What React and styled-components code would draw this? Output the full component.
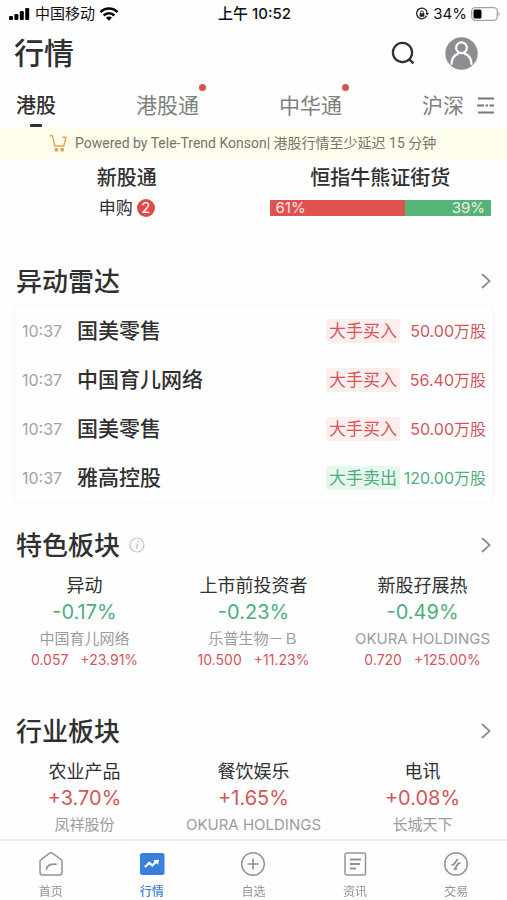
import React from 'react'
import styled, { createGlobalStyle } from 'styled-components'

const GlobalStyle = createGlobalStyle`
    * {
        box-sizing: border-box;
    }

    body {
        margin: 0;
        background: #fefefe;
        color: #303030;
        font-family: Inter, "Noto Sans CJK SC", sans-serif;
    }

    h1, h2, h3, p, ul {
        margin: 0;
        padding: 0;
    }

    h1, h2, h3 {
        font-weight: 500;
    }

    ul {
        list-style: none;
    }

    button {
        display: flex;
        padding: 0;
        border: 0;
        background: none;
        color: inherit;
        font: inherit;
        cursor: pointer;
    }

    a {
        color: inherit;
        text-decoration: none;
    }

    svg {
        display: block;
    }
`

const RED = '#d6555a'
const GREEN = '#4fae7c'

const Page = styled.div`
    display: flex;
    flex-direction: column;
    min-height: 100vh;
`

/* status bar */

const StatusBar = styled.div`
    display: grid;
    grid-template-columns: 1fr auto 1fr;
    align-items: center;
    height: 28px;
    padding: 0 6px 0 8px;
    color: #111;
    font-size: 15px;
    line-height: 20px;
`

const StatusGroup = styled.div`
    display: flex;
    align-items: center;
    justify-content: ${p => (p.$end ? 'flex-end' : 'flex-start')};
    gap: 4px;
`

const Clock = styled.span`
    font-weight: 500;
`

/* title row */

const Header = styled.header`
    display: flex;
    align-items: center;
    height: 50px;
    padding: 0 29px 0 14px;
`

const Title = styled.h1`
    flex: 1;
    font-size: 30px;
    line-height: 40px;
`

const HeaderActions = styled.div`
    display: flex;
    align-items: center;
    gap: 30px;
`

/* market tabs */

const Tabs = styled.nav`
    display: flex;
    align-items: center;
    gap: 13px;
    height: 49px;
    padding: 6px 12px 0 16px;
`

const TabList = styled.div`
    flex: 1;
    display: flex;
    justify-content: space-between;
    align-self: stretch;
`

const Tab = styled.button`
    && {
        position: relative;
        align-items: center;
        color: ${p => (p.$active ? '#303030' : '#808080')};
        font-size: ${p => (p.$active ? 20 : 21)}px;
        font-weight: ${p => (p.$active ? 500 : 400)};
        line-height: 28px;
    }

    &::after {
        content: '';
        display: ${p => (p.$active ? 'block' : 'none')};
        position: absolute;
        bottom: 0;
        left: 50%;
        width: 12px;
        height: 3px;
        margin-left: -6px;
        border-radius: 1px;
        background: #303030;
    }
`

const Dot = styled.i`
    position: absolute;
    top: 0;
    right: -7px;
    width: 7px;
    height: 7px;
    border-radius: 50%;
    background: #d9534f;
`

const Notice = styled.div`
    display: flex;
    align-items: center;
    gap: 8px;
    height: 32px;
    padding-left: 49px;
    background: #fefcea;
    color: #77746a;
    font-family: Roboto, "Noto Sans CJK SC", sans-serif;
    font-size: 14px;
    line-height: 20px;
    white-space: nowrap;
`

/* two shortcuts under the notice */

const Shortcuts = styled.div`
    display: grid;
    grid-template-columns: 1fr 1fr;
    height: 97px;
    padding-top: 5px;
`

const Shortcut = styled.a`
    display: flex;
    flex-direction: column;
    align-items: center;
    gap: 4px;
    padding: 0 16px;
`

const ShortcutTitle = styled.h3`
    font-size: 20px;
    line-height: 28px;
`

const Apply = styled.p`
    display: flex;
    align-items: center;
    gap: 4px;
    font-size: 17px;
    line-height: 24px;
`

const Count = styled.span`
    width: 18px;
    height: 18px;
    border-radius: 50%;
    background: #df4b4a;
    color: #fff;
    font-size: 15px;
    line-height: 18px;
    text-align: center;
`

const Ratio = styled.div`
    display: flex;
    align-self: stretch;
    height: 16px;
    margin-top: 4px;
    color: #fbe9e8;
    font-size: 15px;
    line-height: 16px;
`

const RatioPart = styled.span`
    padding: 0 6px;
    background: ${p => (p.$up ? '#e0524f' : '#55b577')};
    text-align: ${p => (p.$up ? 'left' : 'right')};
`

/* sections */

const SectionHead = styled.div`
    display: flex;
    align-items: center;
    height: 50px;
    padding: 0 16px;
`

const SectionTitle = styled.h2`
    padding-top: 2px;
    font-size: 26px;
    line-height: 36px;
`

const InfoButton = styled.button`
    && {
        margin-left: 9px;
    }
`

const More = styled.button`
    && {
        margin-left: auto;
    }
`

const Card = styled.ul`
    margin: 0 15px 18px;
    border-radius: 4px;
    box-shadow: 0 0 5px rgba(0, 0, 0, 0.05);
`

const Move = styled.li`
    display: flex;
    align-items: center;
    height: 49px;
    padding: 0 6px 0 7px;
    font-size: 16px;
    line-height: 24px;
`

const Time = styled.time`
    width: 55px;
    color: #a2a2a2;
`

const MoveName = styled.span`
    flex: 1;
    font-size: 21px;
    font-weight: 500;
`

const Tag = styled.span`
    padding: 0 3px;
    border-radius: 3px;
    background: ${p => (p.$up ? '#fceeed' : '#e6f7ee')};
    color: ${p => (p.$up ? RED : GREEN)};
    font-size: 17px;
`

const Volume = styled.span`
    width: 86px;
    color: ${p => (p.$up ? RED : GREEN)};
    text-align: right;
    white-space: nowrap;
`

const Boards = styled.div`
    display: grid;
    grid-template-columns: repeat(3, 1fr);
    padding-top: 2px;
    padding-bottom: ${p => (p.$last ? 0 : 37)}px;
`

const Board = styled.a`
    display: flex;
    flex-direction: column;
    align-items: center;
    white-space: nowrap;
`

const BoardName = styled.h3`
    font-size: 18px;
    font-weight: 400;
    line-height: 28px;
`

const Change = styled.span`
    color: ${p => (p.$up ? RED : GREEN)};
    font-size: 20px;
    line-height: 24px;
`

const Stock = styled.span`
    margin-top: 3px;
    color: #9c9c9c;
    font-size: 15px;
    line-height: 24px;
`

const Quote = styled.span`
    display: flex;
    gap: 12px;
    color: ${RED};
    font-size: 14px;
    line-height: 18px;
`

/* bottom bar */

const BottomBar = styled.nav`
    position: sticky;
    bottom: 0;
    display: grid;
    grid-template-columns: repeat(5, 1fr);
    height: 61px;
    margin-top: auto;
    border-top: 2px solid #ededee;
    background: #fefefe;
`

const BottomLink = styled.a`
    display: flex;
    flex-direction: column;
    align-items: center;
    gap: 5px;
    padding-top: 10px;
    color: ${p => (p.$active ? '#3a7fdc' : '#929292')};
    font-size: 12px;
    font-weight: ${p => (p.$active ? 500 : 400)};
    line-height: 20px;
`

/* icons */

const SignalIcon = () => (
    <svg width="23" height="14" viewBox="0 0 23 14" fill="#000">
        <rect x="1" y="9" width="4" height="4" rx="1.2" />
        <rect x="6.4" y="7" width="4" height="6" rx="1.2" />
        <rect x="11.8" y="4" width="4" height="9" rx="1.2" />
        <rect x="17.2" y="1" width="4" height="12" rx="1.2" />
    </svg>
)

const WifiIcon = () => (
    <svg width="20" height="14" viewBox="0 0 20 14" fill="none" stroke="#000" strokeWidth="2.5">
        <path d="M1.5 5.2C6.2.4 13.8.4 18.5 5.2" />
        <path d="M4.7 8.5C7.7 5.5 12.3 5.5 15.3 8.5" />
        <path d="M7 10.8C8.6 9.2 11.4 9.2 13 10.8L10 13.8Z" fill="#000" stroke="none" />
    </svg>
)

const LockIcon = () => (
    <svg width="14" height="14" viewBox="0 0 14 14" fill="none" stroke="#222" strokeWidth="1.3">
        <path d="M11.7 8.8A5.3 5.3 0 1 1 12.2 5.8" />
        <path d="M10.3 6H14L12.2 8.6Z" fill="#222" stroke="none" />
        <rect x="4.6" y="6.2" width="4.8" height="3.6" rx=".6" fill="#222" stroke="none" />
        <path d="M5.6 6.5V5.3a1.4 1.4 0 0 1 2.8 0V6.5" strokeWidth="1" />
    </svg>
)

const BatteryIcon = () => (
    <svg width="30" height="14" viewBox="0 0 30 14">
        <rect x=".7" y=".7" width="25.6" height="12.6" rx="3.5" fill="none" stroke="#a3a3a3" strokeWidth="1.3" />
        <rect x="2.5" y="2.5" width="8" height="9" rx="1.5" fill="#000" />
        <path d="M27.5 4.8Q29.8 7 27.5 9.2Z" fill="#a3a3a3" />
    </svg>
)

const SearchIcon = () => (
    <svg width="24" height="24" viewBox="0 0 24 24" fill="none" stroke="#303030" strokeWidth="2.3">
        <circle cx="11.5" cy="11.5" r="9.6" />
        <path d="M18.3 18.3L22.5 22.3" />
    </svg>
)

const AvatarIcon = () => (
    <svg width="33" height="33" viewBox="0 0 33 33" fill="none" stroke="#fff" strokeWidth="2.2">
        <circle cx="16.5" cy="16.5" r="16.2" fill="#8d8e91" stroke="none" />
        <circle cx="16.5" cy="10.8" r="5.4" />
        <path d="M6.5 27C6.8 21.5 9.2 18.3 13 16.9" strokeLinecap="round" />
        <path d="M20 16.9C23.8 18.3 26.2 21.5 26.5 27" strokeLinecap="round" />
    </svg>
)

const MenuIcon = () => (
    <svg width="18" height="18" viewBox="0 0 18 18" fill="none" stroke="#777" strokeWidth="1.8">
        <path d="M1 1.500H17M0 8.500H7M8.500 8.500H11M12.500 8.500H17M1 15.500H17" />
    </svg>
)

const CartIcon = () => (
    <svg width="18" height="18" viewBox="0 0 18 18" fill="none" stroke="#dfa654" strokeWidth="1.4">
        <path d="M.8 1.7H3.3L5.8 12H14.8L17 3.2H13.5" />
        <circle cx="7.4" cy="15.7" r="1.3" fill="#dfa654" />
        <circle cx="13.2" cy="15.7" r="1.3" fill="#dfa654" />
    </svg>
)

const ArrowIcon = () => (
    <svg width="10" height="16" viewBox="0 0 10 16" fill="none" stroke="#8b8b8b" strokeWidth="1.7">
        <path d="M1 1L8.6 8L1 15" />
    </svg>
)

const InfoIcon = () => (
    <svg width="16" height="16" viewBox="0 0 16 16" fill="none" stroke="#c4c4c4" strokeWidth="1.2">
        <circle cx="8" cy="8" r="7" />
        <path d="M8.6 6.5L7.5 11.8" strokeWidth="1.5" />
        <circle cx="9" cy="4.5" r=".9" fill="#c4c4c4" stroke="none" />
    </svg>
)

const LineIcon = ({ children }) => (
    <svg width="26" height="26" viewBox="0 0 26 26" fill="none" stroke="#929497" strokeWidth="1.5" strokeLinejoin="round">
        {children}
    </svg>
)

const HomeIcon = () => (
    <LineIcon>
        <path d="M2 10.5Q2 9.3 3 8.6L11.7 2.1Q13 1.2 14.3 2.1L23 8.6Q24 9.3 24 10.5V21.5Q24 24 21.5 24H4.5Q2 24 2 21.5Z" />
        <path d="M8.5 18.3C8.8 14.5 12 12.9 18 13.2" strokeWidth="1.8" strokeLinecap="round" />
    </LineIcon>
)

const MarketIcon = () => (
    <LineIcon>
        <rect x="1" y="2" width="24.5" height="22" rx="2.5" fill="#3a7fdc" stroke="none" />
        <path d="M6 16L10.3 11.8L13.3 14.5L17 10.8" stroke="#fff" strokeWidth="2.3" />
        <path d="M14 9.2L20 8.7L19 13.8Z" fill="#fff" stroke="none" />
    </LineIcon>
)

const PlusIcon = () => (
    <LineIcon>
        <circle cx="13" cy="13" r="11.3" />
        <path d="M13 7.5V18.5M7.5 13H18.5" strokeWidth="1.7" />
    </LineIcon>
)

const NewsIcon = () => (
    <LineIcon>
        <rect x="3" y="2" width="20.5" height="22" rx="2" />
        <path d="M8 8.5H19M8 13H18M8 17.5H14" strokeWidth="1.8" />
    </LineIcon>
)

const TradeIcon = () => (
    <LineIcon>
        <circle cx="13" cy="13" r="11.3" />
        <path d="M8.5 14.2L10.8 13.4L14.8 8M17.5 11.8L15.2 12.6L13 16V18.300L10.800 17.800" strokeWidth="1.9" />
    </LineIcon>
)

/* data */

const tabs = [
    { name: '港股', active: true },
    { name: '港股通', dot: true },
    { name: '中华通', dot: true },
    { name: '沪深' },
]

const moves = [
    { time: '10:37', name: '国美零售', tag: '大手买入', volume: '50.00万股', up: true },
    { time: '10:37', name: '中国育儿网络', tag: '大手买入', volume: '56.40万股', up: true },
    { time: '10:37', name: '国美零售', tag: '大手买入', volume: '50.00万股', up: true },
    { time: '10:37', name: '雅高控股', tag: '大手卖出', volume: '120.00万股', up: false },
]

const features = [
    { name: '异动', change: '-0.17%', stock: '中国育儿网络', price: '0.057', rise: '+23.91%' },
    { name: '上市前投资者', change: '-0.23%', stock: '乐普生物－Ｂ', price: '10.500', rise: '+11.23%' },
    { name: '新股孖展热', change: '-0.49%', stock: 'OKURA HOLDINGS', price: '0.720', rise: '+125.00%' },
]

const industries = [
    { name: '农业产品', change: '+3.70%', stock: '凤祥股份' },
    { name: '餐饮娱乐', change: '+1.65%', stock: 'OKURA HOLDINGS' },
    { name: '电讯', change: '+0.08%', stock: '长城天下' },
]

const links = [
    { name: '首页', Icon: HomeIcon },
    { name: '行情', Icon: MarketIcon, active: true },
    { name: '自选', Icon: PlusIcon },
    { name: '资讯', Icon: NewsIcon },
    { name: '交易', Icon: TradeIcon },
]

const Heading = ({ title, info }) => (
    <SectionHead>
        <SectionTitle>{title}</SectionTitle>
        {info && <InfoButton aria-label="说明"><InfoIcon /></InfoButton>}
        <More aria-label="更多"><ArrowIcon /></More>
    </SectionHead>
)

const BoardList = ({ items, last }) => (
    <Boards $last={last}>
        {items.map(item => (
            <Board href="#" key={item.name}>
                <BoardName>{item.name}</BoardName>
                <Change $up={item.change.startsWith('+')}>{item.change}</Change>
                <Stock>{item.stock}</Stock>
                {item.price && (
                    <Quote>
                        <span>{item.price}</span>
                        <span>{item.rise}</span>
                    </Quote>
                )}
            </Board>
        ))}
    </Boards>
)

export default function App() {
    return (
        <Page>
            <GlobalStyle />
            <StatusBar>
                <StatusGroup>
                    <SignalIcon />
                    <span>中国移动</span>
                    <WifiIcon />
                </StatusGroup>
                <Clock>上午 10:52</Clock>
                <StatusGroup $end>
                    <LockIcon />
                    <span>34%</span>
                    <BatteryIcon />
                </StatusGroup>
            </StatusBar>

            <Header>
                <Title>行情</Title>
                <HeaderActions>
                    <button aria-label="搜索"><SearchIcon /></button>
                    <button aria-label="我的"><AvatarIcon /></button>
                </HeaderActions>
            </Header>

            <Tabs>
                <TabList>
                    {tabs.map(tab => (
                        <Tab key={tab.name} $active={tab.active}>
                            {tab.name}
                            {tab.dot && <Dot />}
                        </Tab>
                    ))}
                </TabList>
                <button aria-label="全部市场"><MenuIcon /></button>
            </Tabs>

            <Notice>
                <CartIcon />
                <span>Powered by Tele-Trend Konson| 港股行情至少延迟 15 分钟</span>
            </Notice>

            <Shortcuts>
                <Shortcut href="#">
                    <ShortcutTitle>新股通</ShortcutTitle>
                    <Apply>申购<Count>2</Count></Apply>
                </Shortcut>
                <Shortcut href="#">
                    <ShortcutTitle>恒指牛熊证街货</ShortcutTitle>
                    <Ratio>
                        <RatioPart $up style={{ width: '61%' }}>61%</RatioPart>
                        <RatioPart style={{ width: '39%' }}>39%</RatioPart>
                    </Ratio>
                </Shortcut>
            </Shortcuts>

            <Heading title="异动雷达" />
            <Card>
                {moves.map((move, i) => (
                    <Move key={i}>
                        <Time>{move.time}</Time>
                        <MoveName>{move.name}</MoveName>
                        <Tag $up={move.up}>{move.tag}</Tag>
                        <Volume $up={move.up}>{move.volume}</Volume>
                    </Move>
                ))}
            </Card>

            <Heading title="特色板块" info />
            <BoardList items={features} />

            <Heading title="行业板块" />
            <BoardList items={industries} last />

            <BottomBar>
                {links.map(({ name, Icon, active }) => (
                    <BottomLink href="#" key={name} $active={active}>
                        <Icon />
                        {name}
                    </BottomLink>
                ))}
            </BottomBar>
        </Page>
    )
}
